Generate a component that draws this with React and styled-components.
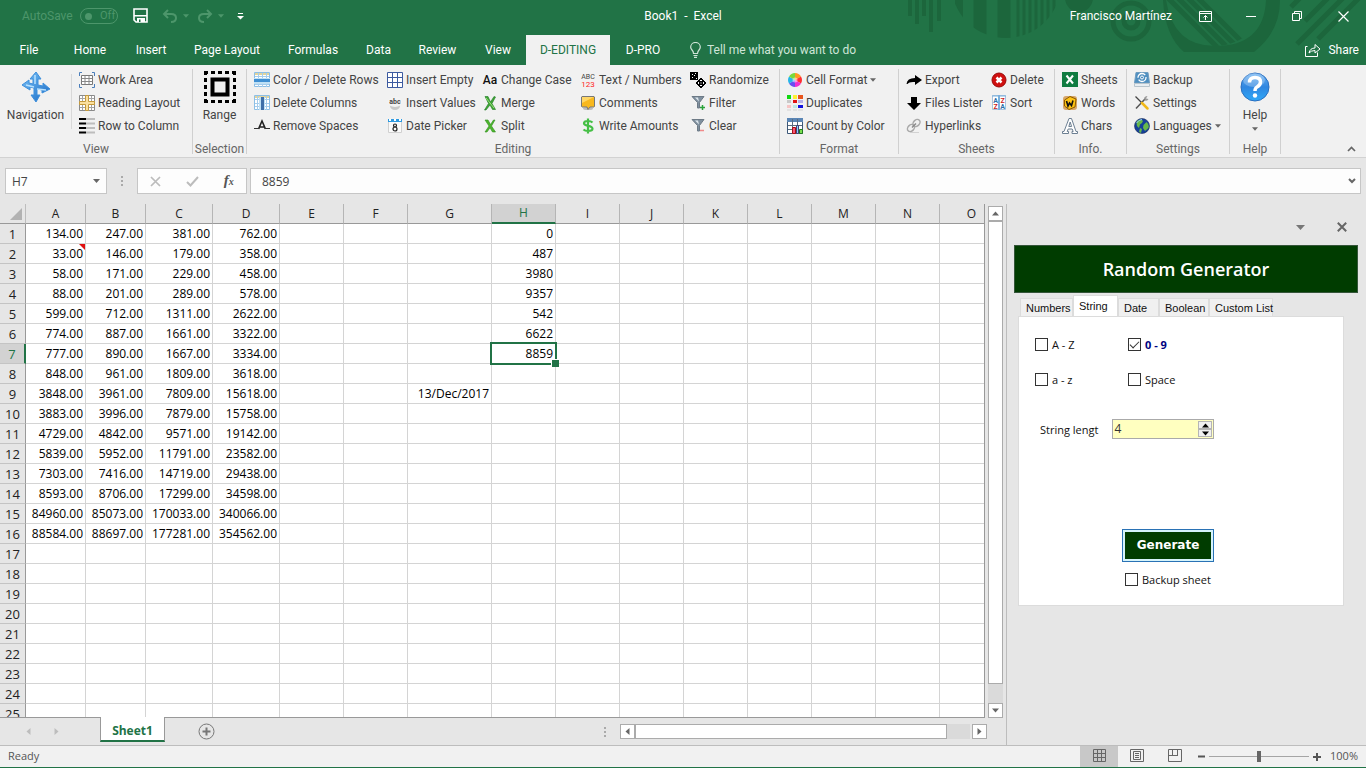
import React, { useState } from 'react';
import styled, { createGlobalStyle, css } from 'styled-components';

const GlobalStyle = createGlobalStyle`
* { box-sizing: border-box; }
body { margin: 0; background: #e6e6e6; }
body, button, input { font-family: Roboto, "Open Sans", sans-serif; font-size: 12px; }
button { border: none; background: none; padding: 0; color: inherit; cursor: pointer; }
svg { display: block; flex: none; }
`;

const columns = [
    ['A', 60], ['B', 60], ['C', 67], ['D', 67], ['E', 64], ['F', 64], ['G', 84], ['H', 64],
    ['I', 64], ['J', 64], ['K', 64], ['L', 64], ['M', 64], ['N', 64], ['O', 64],
];

const numbers = [
    ['134.00', '247.00', '381.00', '762.00'],
    ['33.00', '146.00', '179.00', '358.00'],
    ['58.00', '171.00', '229.00', '458.00'],
    ['88.00', '201.00', '289.00', '578.00'],
    ['599.00', '712.00', '1311.00', '2622.00'],
    ['774.00', '887.00', '1661.00', '3322.00'],
    ['777.00', '890.00', '1667.00', '3334.00'],
    ['848.00', '961.00', '1809.00', '3618.00'],
    ['3848.00', '3961.00', '7809.00', '15618.00'],
    ['3883.00', '3996.00', '7879.00', '15758.00'],
    ['4729.00', '4842.00', '9571.00', '19142.00'],
    ['5839.00', '5952.00', '11791.00', '23582.00'],
    ['7303.00', '7416.00', '14719.00', '29438.00'],
    ['8593.00', '8706.00', '17299.00', '34598.00'],
    ['84960.00', '85073.00', '170033.00', '340066.00'],
    ['88584.00', '88697.00', '177281.00', '354562.00'],
];
const randoms = ['0', '487', '3980', '9357', '542', '6622', '8859'];
const rows = Array.from({ length: 25 }, (_, i) => i + 1);

const cellValue = (row, col) => {
    if (col === 'G' && row === 9) return '13/Dec/2017';
    if (col === 'H') return randoms[row - 1] || '';
    const i = 'ABCD'.indexOf(col);
    return i >= 0 && numbers[row - 1] ? numbers[row - 1][i] : '';
};

const Icon = ({ size = 16, children }) => (
    <svg width={size} height={size} viewBox="0 0 16 16" aria-hidden="true">{children}</svg>
);

const Caret = ({ color = '#666', size = 7 }) => (
    <svg width={size} height="4" viewBox="0 0 7 4" aria-hidden="true"><path d="M0 0h7L3.5 4z" fill={color} /></svg>
);

const icons = {
    workArea: (
        <Icon>
            <path d="M0.5 4V0.5H3M13 0.5h2.5V4M0.5 12v3.5H3M13 15.5h2.5V12" fill="none" stroke="#4a7ebb" />
            <path d="M2.5 3.5h11v9h-11z" fill="#fff" stroke="#777" />
            <path d="M2.5 6.5h11M2.5 9.5h11M6 3.5v9M10 3.5v9" fill="none" stroke="#888" />
        </Icon>
    ),
    readingLayout: (
        <Icon>
            <path d="M0.5 0.5h15v15h-15z" fill="#fff" stroke="#8a8a8a" />
            <path d="M3.5 1v14M12.5 1v14M1 3.5h14M1 12.5h14" stroke="#a5a5a5" />
            <path d="M6.5 0.5h3v6h6v3h-6v6h-3v-6h-6v-3h6z" fill="#fbe0a0" stroke="#c59a3c" />
        </Icon>
    ),
    rowToColumn: (
        <Icon>
            <path d="M0 1h7M0 5.5h7M0 10h7M0 14.5h7" stroke="#000" strokeWidth="2" />
            <path d="M7 1h9M7 5.5h9M7 10h9M7 14.5h9" stroke="#bdbdbd" strokeWidth="2" />
        </Icon>
    ),
    deleteRows: (
        <Icon>
            <path d="M0.5 0.5h15v14h-15z" fill="#fff" stroke="#8cbfe6" />
            <path d="M1 1h14v2H1z" fill="#e3d49a" />
            <path d="M4.5 1v14M8.5 1v14M12.5 1v14M1 4.5h14M1 12.5h14" stroke="#a6cdec" />
            <path d="M0 6h16v6H0z" fill="#bfe0f5" /><path d="M0 7h16v3H0z" fill="#3f8fd2" />
        </Icon>
    ),
    deleteColumns: (
        <Icon>
            <path d="M0.5 0.5h15v14h-15z" fill="#fff" stroke="#8cbfe6" />
            <path d="M1 1h14v2H1z" fill="#e3d49a" />
            <path d="M1 4.5h14M1 8.5h14M1 11.5h14M3.5 1v14M12.5 1v14" stroke="#a6cdec" />
            <path d="M5 2h6v13H5z" fill="#bfe0f5" /><path d="M7 2h3v13H7z" fill="#3f6fa8" />
        </Icon>
    ),
    removeSpaces: (
        <Icon>
            <path d="M4.5 11L8 3l3.5 8M5.5 9h5" fill="none" stroke="#222" strokeWidth="1.6" />
            <path d="M0 10.5h5.5M10.5 10.5H16" stroke="#333" />
        </Icon>
    ),
    insertEmpty: (
        <Icon>
            <path d="M0.5 0.5h15v15h-15zM5.5 0v16M10.5 0v16M0 5.5h16M0 10.5h16" fill="#fff" stroke="#3c5aa0" />
        </Icon>
    ),
    insertValues: (
        <Icon>
            <ellipse cx="8" cy="11" rx="5" ry="4" fill="#c9c9c9" />
            <ellipse cx="8" cy="7" rx="7.5" ry="5" fill="#f3f3f3" />
            <text x="8" y="9" fontSize="7" fontWeight="bold" fill="#444" textAnchor="middle">abc</text>
        </Icon>
    ),
    datePicker: (
        <Icon>
            <path d="M1.5 2.5h13v12h-13z" fill="#fafafa" stroke="#d0d0d0" />
            <path d="M1 1h14v3H1z" fill="#2e9ae0" /><path d="M2 1h2v2H2zM7 1h2v2H7zM12 1h2v2h-2z" fill="#fff" />
            <circle cx="8" cy="7.5" r="1.5" fill="none" stroke="#222" strokeWidth="1.2" />
            <circle cx="8" cy="11" r="2" fill="none" stroke="#222" strokeWidth="1.2" />
        </Icon>
    ),
    changeCase: (
        <Icon>
            <text x="8" y="12" fontSize="12" fontWeight="500" fill="#111" textAnchor="middle">Aa</text>
        </Icon>
    ),
    merge: (
        <Icon>
            <path d="M3 1.5h3L8.500 7 12 1.500l1.500.5L10 8.500l3.500 6h-3L8 10l-4 5H2.500l4-6.500z" fill="#3fa535" stroke="#1f7a24" strokeWidth="0.6" />
            <path d="M4 3l8 10" stroke="#9be07c" />
        </Icon>
    ),
    split: (
        <Icon>
            <path d="M3 2h3l2.500 4.500L11.500 2H13L9.500 8l4 6h-3L8 9.800 5 14H3l4-6z" fill="#4db52c" stroke="#2f8f1e" strokeWidth="0.6" />
        </Icon>
    ),
    textNumbers: (
        <Icon>
            <text x="8" y="7" fontSize="7" fill="#444" textAnchor="middle">ABC</text>
            <text x="8" y="15" fontSize="8" fill="#ff1f1f" textAnchor="middle">123</text>
        </Icon>
    ),
    comments: (
        <Icon>
            <ellipse cx="8" cy="13.5" rx="5" ry="1.5" fill="#9a9a9a" opacity=".6" />
            <path d="M2 1.5h12l.5.5v9.500l-.5.5h-4L8 14.500l-1-2.500H2l-.5-.5V2z" fill="#f8b81e" stroke="#777" />
            <path d="M2 2h12L2 8z" fill="#ffd766" />
        </Icon>
    ),
    writeAmounts: (
        <Icon>
            <path d="M12.5 4.500Q11 3 8 3 4 3 4 5.300 4 7 8 7.800q4.500.8 4.500 3Q12.500 13 8 13 5 13 3.500 11.500M8 .5v15" fill="none" stroke="#45bf45" strokeWidth="2.2" />
        </Icon>
    ),
    randomize: (
        <Icon>
            <path d="M0 0h8v8H0z" fill="#000" />
            <path d="M2 2h1v1H2zM5 1h1v1H5zM4 3h1v1H4zM2 5h1v1H2zM6 6h1v1H6z" fill="#fff" />
            <path d="M11 6l5 5-5 5-5-5z" fill="#000" stroke="#000" strokeLinejoin="round" />
            <path d="M10 8h2v1h-2zM8 10h1v2H8zM10.500 10.500h1v1h-1zM13 10h1v2h-1zM10 13h2v1h-2z" fill="#fff" />
        </Icon>
    ),
    filter: (
        <Icon>
            <path d="M2 1.5h12L9.500 7.500V13h-2V7.500z" fill="#7f909f" stroke="#6d7a86" /><path d="M5 2.500h3l1 4z" fill="#dfe7ee" />
            <path d="M12.500 10v5M10 12.500h5" stroke="#2aa33a" strokeWidth="1.5" />
        </Icon>
    ),
    clear: (
        <Icon>
            <path d="M2 1.5h12L9.500 7.500V13h-2V7.500z" fill="#7f909f" stroke="#6d7a86" /><path d="M5 2.500h3l1 4z" fill="#dfe7ee" />
            <path d="M10 12.500h4" stroke="#f08a8a" strokeWidth="1.5" />
        </Icon>
    ),
    cellFormat: (
        <Icon>
            <path d="M8 8V1a7 7 0 0 1 6 3.500z" fill="#ff9a1f" /><path d="M8 8l6-3.500a7 7 0 0 1 0 7z" fill="#ff3030" />
            <path d="M8 8l6 3.500A7 7 0 0 1 8 15z" fill="#f02fd0" /><path d="M8 8v7a7 7 0 0 1-6-3.500z" fill="#6a4cf0" />
            <path d="M8 8l-6 3.500a7 7 0 0 1 0-7z" fill="#25b6e8" /><path d="M8 8L2 4.500A7 7 0 0 1 8 1z" fill="#7bd93a" />
            <circle cx="8" cy="8" r="2.500" fill="#fff" opacity=".5" />
        </Icon>
    ),
    duplicates: (
        <Icon>
            <path d="M0 0h4v4H0z" fill="#11d911" /><path d="M6 0h4v4H6z" fill="#ffef2e" /><path d="M11 0h5v4h-5z" fill="#e8551c" />
            <path d="M0 5h4v3H0z" fill="#c9c9c9" /><path d="M6 5h4v3H6z" fill="#e01414" /><path d="M11 5h5v3h-5z" fill="#b5b0e8" />
            <path d="M0 10h4v3H0z" fill="#f6c4c4" /><path d="M6 10h4v3H6z" fill="#bde9e4" /><path d="M11 10h5v3h-5z" fill="#1111dd" />
            <path d="M0 14h4v2H0zM6 14h4v2H6zM11 14h5v2h-5z" fill="#e2e2e2" />
        </Icon>
    ),
    countByColor: (
        <Icon>
            <path d="M0.5 0.5h15v15h-15z" fill="#fff" stroke="#3d5878" /><path d="M0 0h16v4H0z" fill="#5b86b5" />
            <path d="M5.500 1v15M10.500 1v6M1 7.500h14M1 11.500h5" stroke="#5a6c80" />
            <path d="M5.500 9.500h3v6h-3z" fill="#f7557a" stroke="#a11" /><path d="M9.500 7.500h2v8h-2z" fill="#8fd0ff" stroke="#447" />
            <path d="M12.500 11.500h3v4h-3z" fill="#7ae04f" stroke="#272" />
        </Icon>
    ),
    exportArrow: (
        <Icon>
            <path d="M0.5 12Q1 6 9 6V3l7 5-7 5v-3Q3 9.500 1.500 12z" fill="#000" />
        </Icon>
    ),
    filesLister: (
        <Icon><path d="M5 2h6v6h4l-7 7-7-7h4z" fill="#000" /></Icon>
    ),
    hyperlinks: (
        <Icon>
            <ellipse cx="10.500" cy="5" rx="4" ry="3" fill="none" stroke="#a9a9a9" strokeWidth="1.5" transform="rotate(-45 10.5 5)" />
            <ellipse cx="5" cy="10" rx="4" ry="3" fill="none" stroke="#a9a9a9" strokeWidth="1.5" transform="rotate(-45 5 10)" />
            <path d="M6 9.500l4-4" stroke="#888" strokeWidth="1.5" /><path d="M4 14.500h9" stroke="#d2d2d2" />
        </Icon>
    ),
    remove: (
        <Icon>
            <circle cx="8" cy="8" r="7" fill="#d01010" stroke="#9a0808" />
            <path d="M5.500 5.500l5 5M10.500 5.500l-5 5" stroke="#fff" strokeWidth="2.500" />
        </Icon>
    ),
    sort: (
        <Icon>
            <path d="M1.5 0.5h13v14h-13z" fill="#fff" stroke="#a9c3dc" /><path d="M8 0v15" stroke="#7ab0dd" strokeWidth="2" />
            <path d="M1 1h14" stroke="#7ab0dd" />
            <text x="4.500" y="7.500" fontSize="7" fontWeight="bold" fill="#2d6da8" textAnchor="middle">A</text>
            <text x="11.500" y="7.500" fontSize="7" fontWeight="bold" fill="#c22" textAnchor="middle">Z</text>
            <text x="4.500" y="14" fontSize="7" fontWeight="bold" fill="#c22" textAnchor="middle">Z</text>
            <text x="11.500" y="14" fontSize="7" fontWeight="bold" fill="#2d6da8" textAnchor="middle">A</text>
        </Icon>
    ),
    sheets: (
        <Icon>
            <path d="M0 0h16v15H0z" fill="#107c41" />
            <path d="M4.500 3.500l6.500 8M11 3.500l-6.500 8" stroke="#fff" strokeWidth="2" />
        </Icon>
    ),
    words: (
        <Icon>
            <rect x="1" y="1" width="14" height="14" rx="3" fill="#d8a76a" />
            <path d="M2.500 5L8 1.500 14 4l-1 8-6 2.500L2.500 11z" fill="#ffc414" stroke="#8a5a00" />
            <path d="M4.500 6l1.500 5L7.500 8l2 2.500L11 5.500" fill="none" stroke="#111" strokeWidth="1.6" />
        </Icon>
    ),
    chars: (
        <Icon>
            <path d="M0.5 15.500v-2H2L7 .5h2.500L14 13.500h1.500v2H10v-2h1.200l-1-2.500h-4l-1 2.500h1.300v2zM6.800 8.500h2.800L8.200 4z" fill="#fff" stroke="#6c7f92" fillRule="evenodd" />
        </Icon>
    ),
    backup: (
        <Icon>
            <path d="M2 .5h12l1.500 10.500h-15z" fill="#4f8fc0" stroke="#6f9dc0" /><path d="M0.5 11.500h15v3h-15z" fill="#e9eef2" stroke="#b8c4cc" />
            <circle cx="8" cy="5.500" r="4" fill="none" stroke="#fff" strokeWidth="1.300" strokeDasharray="10 2" />
            <circle cx="8" cy="5.500" r="1.500" fill="none" stroke="#fff" />
        </Icon>
    ),
    settings: (
        <Icon>
            <path d="M2 13.500L11 4" stroke="#555" strokeWidth="1.500" /><path d="M10 3.500Q10.500 1 13.500 1L12 3.500l2.500.5Q13.500 6.500 11 5.500" fill="#999" />
            <path d="M1.5 1.500L8 8" stroke="#444" strokeWidth="1.200" /><path d="M8 8l5.500 5.500" stroke="#f0b81a" strokeWidth="2.500" strokeLinecap="round" />
        </Icon>
    ),
    languages: (
        <Icon>
            <circle cx="8" cy="8" r="7.500" fill="#16409a" stroke="#1d2f55" strokeWidth=".6" />
            <path d="M3 3q4-2.500 6 0-1 3-3 3.500L5 10Q1.500 8 3 3zM9.500 7l3-3q3 3 2 6L11 13 9 10zM6 10l2 1-1 4-2-1z" fill="#67b84a" />
            <path d="M2.500 5Q5 1.500 8 1.500" stroke="#8fd0ff" fill="none" />
        </Icon>
    ),
};

/* ---- ribbon ---- */

const editing = [
    [133, [['deleteRows', 'Color / Delete Rows'], ['deleteColumns', 'Delete Columns'], ['removeSpaces', 'Remove Spaces']]],
    [95, [['insertEmpty', 'Insert Empty'], ['insertValues', 'Insert Values'], ['datePicker', 'Date Picker']]],
    [98, [['changeCase', 'Change Case'], ['merge', 'Merge'], ['split', 'Split']]],
    [110, [['textNumbers', 'Text / Numbers'], ['comments', 'Comments'], ['writeAmounts', 'Write Amounts']]],
    [89, [['randomize', 'Randomize'], ['filter', 'Filter'], ['clear', 'Clear']]],
];

const Tools = ({ cols }) => cols.map(([width, items], i) => (
    <ToolColumn key={i} $width={width}>
        {items.map(([icon, label, drop]) => (
            <Tool key={label} type="button">{icons[icon]}<ToolLabel>{label}</ToolLabel>{drop && <Caret size={6} />}</Tool>
        ))}
    </ToolColumn>
));

const NavigationIcon = () => (
    <svg width="30" height="32" viewBox="0 0 30 32" aria-hidden="true">
        <defs>
            <linearGradient id="nav" x1="0" y1="0" x2="1" y2="1"><stop offset="0" stopColor="#7cc4f8" /><stop offset="1" stopColor="#1668c4" /></linearGradient>
        </defs>
        <path d="M15 1l5 7h-3v6l5 1v-3l7 6-8 4v-3l-5-1v6h3l-4 7-5-7h3v-7l-4-1v3l-8-5 7-5v3l4 1V8H9z" fill="url(#nav)" stroke="#3d8fdc" />
        <path d="M14 4v9M5 14l8 2M16 18l9 1" stroke="#b8e2ff" strokeWidth="1.500" />
    </svg>
);

const RangeIcon = () => (
    <svg width="32" height="32" viewBox="0 0 32 32" aria-hidden="true">
        <path d="M0 1.500h32M0 30.500h32M1.500 0v32M30.500 0v32" stroke="#000" strokeWidth="3" strokeDasharray="4 3" />
        <rect x="8.500" y="8.500" width="15" height="15" fill="none" stroke="#000" strokeWidth="4" />
    </svg>
);

const HelpIcon = () => (
    <svg width="32" height="32" viewBox="0 0 32 32" aria-hidden="true">
        <defs>
            <linearGradient id="help" x1="0" y1="0" x2="0" y2="1"><stop offset="0" stopColor="#6cb2f2" /><stop offset=".5" stopColor="#2f86e0" /><stop offset="1" stopColor="#2fa8f8" /></linearGradient>
        </defs>
        <circle cx="16" cy="16" r="14" fill="url(#help)" stroke="#2a6fc0" />
        <ellipse cx="15" cy="9" rx="11" ry="7" fill="#fff" opacity=".25" />
        <path d="M10.500 11.500q0-5 5.500-5t5.500 4.500q0 3-3.500 5-2 1-2 4" fill="none" stroke="#fff" strokeWidth="3.500" />
        <circle cx="16" cy="24.500" r="2.200" fill="#fff" />
    </svg>
);

const Ribbon = () => (
    <RibbonBar>
        <Group>
            <GroupBody>
                <BigTool type="button" $width={71}><NavigationIcon />Navigation</BigTool>
                <InnerLine />
                <Tools cols={[[113, [['workArea', 'Work Area'], ['readingLayout', 'Reading Layout'], ['rowToColumn', 'Row to Column']]]]} />
            </GroupBody>
            <GroupName>View</GroupName>
        </Group>
        <Group>
            <GroupBody><BigTool type="button" $width={53}><RangeIcon />Range</BigTool></GroupBody>
            <GroupName>Selection</GroupName>
        </Group>
        <Group>
            <GroupBody $pad><Tools cols={editing} /></GroupBody>
            <GroupName>Editing</GroupName>
        </Group>
        <Group>
            <GroupBody $pad><Tools cols={[[111, [['cellFormat', 'Cell Format', true], ['duplicates', 'Duplicates'], ['countByColor', 'Count by Color']]]]} /></GroupBody>
            <GroupName>Format</GroupName>
        </Group>
        <Group>
            <GroupBody $pad>
                <Tools cols={[
                    [85, [['exportArrow', 'Export'], ['filesLister', 'Files Lister'], ['hyperlinks', 'Hyperlinks']]],
                    [63, [['remove', 'Delete'], ['sort', 'Sort']]],
                ]} />
            </GroupBody>
            <GroupName>Sheets</GroupName>
        </Group>
        <Group>
            <GroupBody $pad><Tools cols={[[64, [['sheets', 'Sheets'], ['words', 'Words'], ['chars', 'Chars']]]]} /></GroupBody>
            <GroupName>Info.</GroupName>
        </Group>
        <Group>
            <GroupBody $pad><Tools cols={[[95, [['backup', 'Backup'], ['settings', 'Settings'], ['languages', 'Languages', true]]]]} /></GroupBody>
            <GroupName>Settings</GroupName>
        </Group>
        <Group>
            <GroupBody><BigTool type="button" $width={50}><HelpIcon />Help<Caret size={6} /></BigTool></GroupBody>
            <GroupName>Help</GroupName>
        </Group>
        <Collapse type="button" aria-label="Collapse the ribbon">
            <svg width="9" height="6" viewBox="0 0 9 6"><path d="M1 5l3.500-3.500L8 5" fill="none" stroke="#666" strokeWidth="1.700" /></svg>
        </Collapse>
    </RibbonBar>
);

/* ---- title bar ---- */

const Artwork = () => (
    <Art width="466" height="65" viewBox="900 0 466 65" aria-hidden="true">
        <defs>
            <clipPath id="disc"><circle cx="1006" cy="-17" r="55" /></clipPath>
            <clipPath id="bowl"><circle cx="1215" cy="-6" r="52" /></clipPath>
        </defs>
        <g stroke="#1c663c" fill="none">
            <path d="M910 0v16M917 0v24M924 0v16M931 0v32M939 0v21" strokeWidth="4" />
            <g clipPath="url(#disc)">
                <path d="M959 0v40" strokeWidth="8" /><path d="M980 0v40M1004 0v40" strokeWidth="13" />
                <path d="M1018 0v40M1024 0v40M1030 0v40M1036 0v40M1042 0v40M1048 0v40M1054 0v40" strokeWidth="3" />
            </g>
            <circle cx="1079" cy="-2" r="14" fill="#1c663c" stroke="none" />
            <circle cx="1131" cy="21" r="18" strokeWidth="5" />
            <circle cx="1131" cy="21" r="7" strokeWidth="5" />
            <path d="M1163 0q2 36 21 52h70q26-20 26-52h-14q-2 46-51 46-42 0-49-46z" fill="#1c663c" stroke="none" />
            <g clipPath="url(#bowl)" strokeWidth="5">
                <path d="M1160-10l66 66M1170-10l66 66M1180-10l66 66M1190-10l66 66" />
            </g>
            <path d="M1291 7l14-14M1305 21l28-28M1297 44l51-51M1318 39l46-46" strokeWidth="5" />
        </g>
    </Art>
);

const tabs = [
    ['File', 58], ['Home', 64], ['Insert', 58], ['Page Layout', 94], ['Formulas', 78], ['Data', 53],
    ['Review', 65], ['View', 56], ['D-EDITING', 84], ['D-PRO', 66],
];

const TitleBar = () => (
    <Header>
        <Artwork />
        <TitleRow>
            <QuickAccess>
                <AutoSave>AutoSave<Toggle type="button" role="switch" aria-checked="false"><Knob />Off</Toggle></AutoSave>
                <QuickButton type="button" aria-label="Save" $left={15}>
                    <svg width="16" height="16" viewBox="0 0 16 16"><path d="M1 1h13v13H3l-2-2z" fill="none" stroke="#fff" strokeWidth="1.600" /><path d="M1 7h13v1.600H1zM4 10h8v4H4z" fill="#fff" /><path d="M6 11.500h1.500V14H6z" fill="#217346" /></svg>
                </QuickButton>
                <QuickButton type="button" aria-label="Undo" $left={13}>
                    <svg width="16" height="14" viewBox="0 0 16 14"><path d="M6 1L2 5l4 4M2 5h7q5 0 5 4t-5 4" fill="none" stroke="#4d966b" strokeWidth="2" /></svg>
                    <Caret color="#4d966b" size={6} />
                </QuickButton>
                <QuickButton type="button" aria-label="Redo" $left={8}>
                    <svg width="16" height="14" viewBox="0 0 16 14"><path d="M10 1l4 4-4 4M14 5H7Q2 5 2 9t5 4" fill="none" stroke="#4d966b" strokeWidth="2" /></svg>
                    <Caret color="#4d966b" size={6} />
                </QuickButton>
                <QuickButton type="button" aria-label="Customize Quick Access Toolbar" $left={13}>
                    <svg width="7" height="7" viewBox="0 0 7 7"><path d="M1 .5h5" stroke="#fff" /><path d="M0 3h7L3.500 6.500z" fill="#fff" /></svg>
                </QuickButton>
            </QuickAccess>
            <FileName>Book1&nbsp; -&nbsp; Excel</FileName>
            <WindowArea>
                <span>Francisco Martínez</span>
                <WindowButtons>
                    <WindowButton type="button" aria-label="Ribbon display options">
                        <svg width="13" height="11" viewBox="0 0 13 11"><path d="M.5.5h12v10H.5zM.5 2.500h12M6.500 9V4.500M4.500 6.500l2-2 2 2" fill="none" stroke="#fff" /></svg>
                    </WindowButton>
                    <WindowButton type="button" aria-label="Minimize">
                        <svg width="10" height="10" viewBox="0 0 10 10"><path d="M0 5.500h10" stroke="#fff" /></svg>
                    </WindowButton>
                    <WindowButton type="button" aria-label="Restore">
                        <svg width="10" height="10" viewBox="0 0 10 10"><path d="M.5 2.500h7v7h-7zM2.500 2.500v-2h7v7h-2" fill="none" stroke="#fff" /></svg>
                    </WindowButton>
                    <WindowButton type="button" aria-label="Close">
                        <svg width="11" height="11" viewBox="0 0 11 11"><path d="M.5.5l10 10M10.500.5l-10 10" stroke="#fff" strokeWidth="1.200" /></svg>
                    </WindowButton>
                </WindowButtons>
            </WindowArea>
        </TitleRow>
        <TabRow>
            {tabs.map(([name, width]) => (
                <RibbonTab key={name} type="button" $width={width} $active={name === 'D-EDITING'}>{name}</RibbonTab>
            ))}
            <TellMe>
                <svg width="11" height="16" viewBox="0 0 11 16" aria-hidden="true"><path d="M3.500 11.500q0-2-1.500-3.500T.7 5A4.800 4.500 0 0 1 10.300 5Q10.300 6.500 9 8t-1.500 3.500zM3.500 13.500h4M4 15.300h3" fill="none" stroke="#cfe5d8" strokeWidth="1.200" /></svg>
                <TellMeInput aria-label="Tell me what you want to do" placeholder="Tell me what you want to do" />
            </TellMe>
            <Share type="button">
                <svg width="16" height="14" viewBox="0 0 16 14" aria-hidden="true"><path d="M2.500 3.500h-2v10h12v-4M4 10q1-5 6-5V1.500L15 6l-5 4V7.500Q6 7.500 4 10z" fill="none" stroke="#fff" /></svg>
                Share
            </Share>
        </TabRow>
    </Header>
);

/* ---- sheet ---- */

const Sheet = () => (
    <SheetArea>
        <Table>
            <colgroup>
                <col style={{ width: 26 }} />
                {columns.map(([c, w]) => <col key={c} style={{ width: w }} />)}
            </colgroup>
            <thead>
                <tr>
                    <Corner><svg width="12" height="12" viewBox="0 0 12 12" aria-label="Select all"><path d="M12 0v12H0z" fill="#b2b2b2" /></svg></Corner>
                    {columns.map(([c]) => <ColHead key={c} scope="col" $active={c === 'H'}>{c}</ColHead>)}
                </tr>
            </thead>
            <tbody>
                {rows.map((r) => (
                    <tr key={r}>
                        <RowHead scope="row" $active={r === 7}>{r}</RowHead>
                        {columns.map(([c]) => (
                            <Cell key={c}>
                                {cellValue(r, c)}
                                {c === 'A' && r === 2 && <NoteMark />}
                                {c === 'H' && r === 7 && <Selection />}
                            </Cell>
                        ))}
                    </tr>
                ))}
            </tbody>
        </Table>
    </SheetArea>
);

const Arrow = ({ turn = 0, color = '#666' }) => (
    <svg width="9" height="9" viewBox="0 0 9 9" aria-hidden="true"><path d="M1 6.500L4.500 2.500 8 6.500z" fill={color} transform={`rotate(${turn} 4.500 4.500)`} /></svg>
);

const SheetBar = () => (
    <BottomBar>
        <SheetArrows>
            <button type="button" aria-label="Previous sheet"><Arrow turn={-90} color="#bdbdbd" /></button>
            <button type="button" aria-label="Next sheet"><Arrow turn={90} color="#bdbdbd" /></button>
        </SheetArrows>
        <SheetTab type="button">Sheet1</SheetTab>
        <AddSheet type="button" aria-label="New sheet">
            <svg width="17" height="17" viewBox="0 0 17 17"><circle cx="8.500" cy="8.500" r="7.500" fill="none" stroke="#777" /><path d="M8.500 4.500v8M4.500 8.500h8" stroke="#777" strokeWidth="2" /></svg>
        </AddSheet>
        <HScroll>
            <Dots />
            <ScrollButton type="button" aria-label="Scroll left"><Arrow turn={-90} /></ScrollButton>
            <HTrack><HThumb /></HTrack>
            <ScrollButton type="button" aria-label="Scroll right"><Arrow turn={90} /></ScrollButton>
        </HScroll>
    </BottomBar>
);

/* ---- task pane ---- */

const paneTabs = [['Numbers', 53], ['String', 45], ['Date', 41], ['Boolean', 50], ['Custom List', 64]];

const RandomPane = () => {
    const [tab, setTab] = useState('String');
    const [length, setLength] = useState(4);
    return (
        <Pane>
            <PaneTools>
                <button type="button" aria-label="Task pane options"><svg width="9" height="5" viewBox="0 0 9 5"><path d="M0 0h9L4.500 5z" fill="#777" /></svg></button>
                <button type="button" aria-label="Close pane"><svg width="10" height="10" viewBox="0 0 10 10"><path d="M.8.8l8.400 8.400M9.200.8L.8 9.200" stroke="#666" strokeWidth="2" /></svg></button>
            </PaneTools>
            <Banner>Random Generator</Banner>
            <PaneTabs role="tablist">
                {paneTabs.map(([name, width]) => (
                    <PaneTab key={name} type="button" role="tab" aria-selected={tab === name} $active={tab === name} $width={width} onClick={() => setTab(name)}>{name}</PaneTab>
                ))}
            </PaneTabs>
            <PaneBody>
                <CheckGrid>
                    <Check><CheckBox type="checkbox" />A - Z</Check>
                    <Check $strong><CheckBox type="checkbox" defaultChecked />0 - 9</Check>
                    <Check><CheckBox type="checkbox" />a - z</Check>
                    <Check><CheckBox type="checkbox" />Space</Check>
                </CheckGrid>
                <LengthRow>
                    <label htmlFor="length">String lengt</label>
                    <Spinner>
                        <SpinInput id="length" value={length} onChange={(e) => setLength(e.target.value)} />
                        <SpinButtons>
                            <SpinButton type="button" aria-label="Increase" onClick={() => setLength(Number(length) + 1)}><Arrow color="#000" /></SpinButton>
                            <SpinButton type="button" aria-label="Decrease" onClick={() => setLength(Number(length) - 1)}><Arrow color="#000" turn={180} /></SpinButton>
                        </SpinButtons>
                    </Spinner>
                </LengthRow>
                <Actions>
                    <Generate type="button">Generate</Generate>
                    <Check><CheckBox type="checkbox" />Backup sheet</Check>
                </Actions>
            </PaneBody>
        </Pane>
    );
};

const App = () => (
    <>
        <GlobalStyle />
        <Window>
            <TitleBar />
            <Ribbon />
            <FormulaBar>
                <NameBox>
                    <NameInput aria-label="Name box" defaultValue="H7" />
                    <Caret />
                </NameBox>
                <Dots />
                <FormulaButtons>
                    <button type="button" aria-label="Cancel"><svg width="11" height="11" viewBox="0 0 11 11"><path d="M1 1l9 9M10 1l-9 9" stroke="#bcbcbc" strokeWidth="1.700" /></svg></button>
                    <button type="button" aria-label="Enter"><svg width="13" height="11" viewBox="0 0 13 11"><path d="M1 6l3.500 3.500L12 1" fill="none" stroke="#bcbcbc" strokeWidth="2" /></svg></button>
                    <Fx type="button" aria-label="Insert function">f<sub>x</sub></Fx>
                </FormulaButtons>
                <FormulaBox>
                    <NameInput aria-label="Formula" defaultValue="8859" />
                    <svg width="8" height="6" viewBox="0 0 8 6" aria-hidden="true"><path d="M1 1l3 3 3-3" fill="none" stroke="#666" strokeWidth="2" /></svg>
                </FormulaBox>
            </FormulaBar>
            <Workspace>
                <Book>
                    <SheetRow>
                        <Sheet />
                        <VScroll>
                            <ScrollButton type="button" aria-label="Scroll up"><Arrow /></ScrollButton>
                            <VTrack><VThumb /></VTrack>
                            <ScrollButton type="button" aria-label="Scroll down"><Arrow turn={180} /></ScrollButton>
                        </VScroll>
                    </SheetRow>
                    <SheetBar />
                </Book>
                <RandomPane />
            </Workspace>
            <StatusBar>
                <StatusText>Ready</StatusText>
                <StatusTools>
                    <ViewButton type="button" aria-label="Normal view" $active>
                        <svg width="13" height="13" viewBox="0 0 13 13"><path d="M.5.5h12v12H.5zM4.500 0v13M8.500 0v13M0 4.500h13M0 8.500h13" fill="none" stroke="#666" /></svg>
                    </ViewButton>
                    <ViewButton type="button" aria-label="Page layout view">
                        <svg width="14" height="13" viewBox="0 0 14 13"><path d="M.5.5h13v12H.5zM3.500 2.500h7v8h-7zM5 4.500h4M5 6.500h4M5 8.500h4" fill="none" stroke="#666" /></svg>
                    </ViewButton>
                    <ViewButton type="button" aria-label="Page break view">
                        <svg width="14" height="13" viewBox="0 0 14 13"><path d="M.5.5h13v12H.5zM4.500 0v6.500M9.500 0v6.500M0 6.500h10" fill="none" stroke="#666" /></svg>
                    </ViewButton>
                    <ZoomButton type="button" aria-label="Zoom out"><svg width="7" height="7" viewBox="0 0 7 7"><path d="M0 3.500h7" stroke="#555" strokeWidth="2" /></svg></ZoomButton>
                    <ZoomSlider type="range" aria-label="Zoom" min="0" max="100" defaultValue="50" />
                    <ZoomButton type="button" aria-label="Zoom in"><svg width="8" height="8" viewBox="0 0 8 8"><path d="M0 4h8M4 0v8" stroke="#555" strokeWidth="2" /></svg></ZoomButton>
                    <ZoomValue type="button">100%</ZoomValue>
                </StatusTools>
            </StatusBar>
        </Window>
    </>
);

const Window = styled.div`
display: flex;
flex-direction: column;
height: 100vh;
overflow: hidden;
background: #e6e6e6;
color: #444;
`;

const Header = styled.header`
position: relative;
background: #217346;
color: #fff;
`;
const Art = styled.svg`
position: absolute;
top: 0;
right: 0;
`;
const TitleRow = styled.div`
position: relative;
display: grid;
grid-template-columns: 1fr auto 1fr;
align-items: center;
height: 32px;
`;
const QuickAccess = styled.div`
display: flex;
align-items: center;
padding-left: 22px;
`;
const AutoSave = styled.span`
display: flex;
align-items: center;
justify-content: space-between;
width: 96px;
color: #4d966b;
`;
const Toggle = styled.button`
display: flex;
align-items: center;
gap: 8px;
width: 38px;
height: 16px;
padding-left: 4px;
border: 1px solid #4d966b;
border-radius: 8px;
font-size: 11px;
line-height: 14px;
color: #4d966b;
`;
const Knob = styled.span`
width: 7px;
height: 7px;
border-radius: 50%;
background: #4d966b;
`;
const QuickButton = styled.button`
display: flex;
align-items: center;
gap: 5px;
margin-left: ${(p) => p.$left}px;
`;
const FileName = styled.span`
white-space: nowrap;
`;
const WindowArea = styled.div`
display: flex;
align-items: center;
justify-content: flex-end;
gap: 10px;
`;
const WindowButtons = styled.div`
display: flex;
`;
const WindowButton = styled.button`
display: flex;
align-items: center;
justify-content: center;
width: 46px;
height: 30px;
`;
const TabRow = styled.nav`
position: relative;
display: flex;
align-items: center;
height: 33px;
padding-top: 3px;
`;
const RibbonTab = styled.button`
width: ${(p) => p.$width}px;
height: 30px;
white-space: nowrap;
color: ${(p) => (p.$active ? '#217346' : '#fff')};
background: ${(p) => (p.$active ? '#f1f1f1' : 'transparent')};
`;
const TellMe = styled.div`
display: flex;
flex: 1;
align-items: center;
gap: 6px;
padding-left: 14px;
`;
const TellMeInput = styled.input`
flex: 1;
border: none;
outline: none;
padding: 0;
background: none;
color: #fff;
&::placeholder { color: #cfe5d8; opacity: 1; }
`;
const Share = styled.button`
display: flex;
align-items: center;
gap: 7px;
padding-right: 7px;
`;

const RibbonBar = styled.div`
display: flex;
height: 93px;
padding-top: 4px;
background: #f1f1f1;
border-bottom: 1px solid #d2d2d2;
`;
const Group = styled.section`
display: flex;
flex-direction: column;
height: 85px;
border-right: 1px solid #d0d0d0;
`;
const GroupBody = styled.div`
display: flex;
height: 71px;
padding-left: ${(p) => (p.$pad ? 7 : 0)}px;
`;
const GroupName = styled.div`
height: 14px;
line-height: 18px;
text-align: center;
color: #666;
`;
const ToolColumn = styled.div`
width: ${(p) => p.$width}px;
`;
const InnerLine = styled.div`
height: 55px;
margin: 5px 7px 0 0;
border-left: 1px solid #d8d8d8;
`;
const Tool = styled.button`
display: flex;
align-items: center;
gap: 3px;
height: 23px;
padding-bottom: 2px;
`;
const ToolLabel = styled.span`
white-space: nowrap;
`;
const BigTool = styled.button`
display: flex;
flex-direction: column;
align-items: center;
gap: 3px;
width: ${(p) => p.$width}px;
height: 64px;
padding-top: 2px;
line-height: 18px;
`;
const Collapse = styled.button`
margin-left: auto;
align-self: flex-end;
padding: 0 10px 5px 0;
`;

const field = css`
display: flex;
align-items: center;
height: 26px;
border: 1px solid #c6c6c6;
background: #fdfdfd;
`;
const FormulaBar = styled.div`
display: flex;
align-items: center;
height: 46px;
padding: 0 5px;
`;
const NameBox = styled.div`
${field}
width: 102px;
padding: 0 6px;
`;
const NameInput = styled.input`
flex: 1;
min-width: 0;
border: none;
outline: none;
padding: 0;
background: none;
font-family: "Open Sans", sans-serif;
color: #444;
`;
const Dots = styled.span`
flex: none;
width: 2px;
height: 10px;
margin: 0 14px;
background: repeating-linear-gradient(#aaa 0 2px, transparent 2px 4px);
`;
const FormulaButtons = styled.div`
${field}
justify-content: space-around;
width: 110px;
margin: 0 3px 0 0;
`;
const Fx = styled.button`
font-family: "Liberation Serif", serif;
font-style: italic;
font-weight: bold;
font-size: 15px;
line-height: 16px;
color: #555;
sub { font-size: 10px; vertical-align: baseline; }
`;
const FormulaBox = styled.div`
${field}
flex: 1;
padding: 0 4px 0 11px;
`;

const Workspace = styled.main`
display: flex;
flex: 1;
min-height: 0;
font-family: "Open Sans", sans-serif;
`;
const Book = styled.div`
display: flex;
flex-direction: column;
flex: 1;
min-width: 0;
`;
const SheetRow = styled.div`
display: flex;
flex: 1;
min-height: 0;
`;
const SheetArea = styled.div`
flex: 1;
overflow: hidden;
border-right: 1px solid #999;
border-bottom: 1px solid #999;
background: #fff;
`;
const Table = styled.table`
table-layout: fixed;
width: 1004px;
border-collapse: separate;
border-spacing: 0;
`;
const headCell = css`
height: 20px;
padding: 0;
font-size: 13px;
font-weight: normal;
line-height: 18px;
text-align: center;
color: ${(p) => (p.$active ? '#217346' : '#222')};
background: ${(p) => (p.$active ? '#d2d2d2' : '#e6e6e6')};
`;
const Corner = styled.td`
${headCell}
border-right: 1px solid #bdbdbd;
border-bottom: 1px solid #999;
svg { margin: 1px 0 0 10px; }
`;
const ColHead = styled.th`
${headCell}
font-size: 12px;
border-right: 1px solid #b5b5b5;
border-bottom: ${(p) => (p.$active ? '2px solid #217346' : '1px solid #999')};
`;
const RowHead = styled.th`
${headCell}
border-right: ${(p) => (p.$active ? '2px solid #217346' : '1px solid #999')};
border-bottom: 1px solid #c4c4c4;
`;
const Cell = styled.td`
position: relative;
height: 20px;
padding: 0 2px 0 0;
border-right: 1px solid #d4d4d4;
border-bottom: 1px solid #d4d4d4;
line-height: 19px;
text-align: right;
white-space: nowrap;
color: #000;
`;
const NoteMark = styled.span`
position: absolute;
top: 0;
right: 0;
border: 3px solid;
border-color: #e01010 #e01010 transparent transparent;
`;
const Selection = styled.span`
position: absolute;
z-index: 1;
inset: -2px;
border: 2px solid #217346;
&::after {
    content: "";
    position: absolute;
    right: -4px;
    bottom: -4px;
    width: 7px;
    height: 7px;
    border: solid #fff;
    border-width: 1px 0 0 1px;
    background: #217346;
}
`;

const VScroll = styled.div`
display: flex;
flex-direction: column;
width: 22px;
padding: 2px 3px 0;
border-right: 1px solid #bdbdbd;
`;
const ScrollButton = styled.button`
display: flex;
align-items: center;
justify-content: center;
flex: none;
width: 15px;
height: 15px;
border: 1px solid #ababab;
background: #fff;
`;
const VTrack = styled.div`
flex: 1;
width: 15px;
background: #dadada;
`;
const VThumb = styled.div`
height: 96%;
border: 1px solid #ababab;
background: #fff;
`;
const BottomBar = styled.div`
display: flex;
height: 27px;
border-right: 1px solid #bdbdbd;
`;
const SheetArrows = styled.div`
display: flex;
gap: 19px;
width: 100px;
padding-left: 24px;
`;
const SheetTab = styled.button`
position: relative;
width: 65px;
height: 25px;
margin-top: -1px;
padding-top: 3px;
border: solid #999;
border-width: 0 1px 2px;
border-bottom-color: #217346;
background: #fff;
font-family: "Open Sans", sans-serif;
font-weight: bold;
color: #217346;
`;
const AddSheet = styled.button`
margin-left: 33px;
`;
const HScroll = styled.div`
display: flex;
align-items: center;
width: 416px;
margin-left: auto;
padding-right: 19px;
`;
const HTrack = styled.div`
flex: 1;
height: 15px;
margin-right: 2px;
background: #dadada;
`;
const HThumb = styled.div`
width: 93%;
height: 15px;
border: 1px solid #ababab;
background: #fff;
`;

const Pane = styled.aside`
display: flex;
flex-direction: column;
flex: none;
width: 359px;
padding: 0 8px 0 7px;
color: #111;
`;
const PaneTools = styled.div`
display: flex;
justify-content: flex-end;
align-items: center;
gap: 32px;
height: 41px;
padding: 5px 11px 0 0;
`;
const Banner = styled.h1`
margin: 0;
border: 1px solid #35553a;
background: #003c00;
color: #fff;
font-size: 18px;
font-weight: 600;
line-height: 46px;
text-align: center;
`;
const PaneTabs = styled.div`
display: flex;
align-items: flex-end;
height: 23px;
padding-left: 6px;
`;
const PaneTab = styled.button`
width: ${(p) => p.$width}px;
height: ${(p) => (p.$active ? 21 : 18)}px;
padding-left: 5px;
border: 1px solid #dcdcdc;
border-bottom: none;
background: ${(p) => (p.$active ? '#fff' : '#f0f0f0')};
font-family: "Liberation Sans", Arial, sans-serif;
font-size: 11px;
text-align: left;
white-space: nowrap;
`;
const PaneBody = styled.div`
width: 326px;
height: 290px;
margin-left: 4px;
padding: 20px 16px;
border: 1px solid #dcdcdc;
background: #fff;
font-size: 11px;
`;
const CheckGrid = styled.div`
display: grid;
grid-template-columns: 93px 1fr;
row-gap: 21px;
`;
const Check = styled.label`
display: flex;
align-items: center;
gap: 4px;
height: 14px;
white-space: nowrap;
font-weight: ${(p) => (p.$strong ? 'bold' : 'normal')};
color: ${(p) => (p.$strong ? '#000080' : '#111')};
`;
const CheckBox = styled.input`
appearance: none;
flex: none;
width: 13px;
height: 13px;
margin: 0;
border: 1px solid #333;
background: #fff;
&:checked::before {
    content: "";
    display: block;
    width: 8px;
    height: 4px;
    margin: 2px 0 0 1px;
    border: solid #333;
    border-width: 0 0 1px 1px;
    transform: rotate(-45deg);
}
`;
const LengthRow = styled.div`
display: flex;
align-items: center;
gap: 14px;
margin-top: 33px;
padding-left: 5px;
`;
const Spinner = styled.div`
display: flex;
width: 102px;
height: 20px;
border: 1px solid #aaa;
background: #ffffc0;
`;
const SpinInput = styled.input`
flex: 1;
min-width: 0;
border: none;
outline: none;
padding: 0 1px 2px;
background: none;
font-family: "Open Sans", sans-serif;
color: #333;
`;
const SpinButtons = styled.div`
display: flex;
flex-direction: column;
width: 15px;
padding: 1px 1px 1px 0;
`;
const SpinButton = styled.button`
display: flex;
flex: 1;
align-items: center;
justify-content: center;
overflow: hidden;
border: 1px solid #b5b5b5;
background: #f0f0f0;
`;
const Actions = styled.div`
display: flex;
flex-direction: column;
align-items: flex-start;
gap: 10px;
margin-top: 90px;
padding-left: 90px;
`;
const Generate = styled.button`
width: 92px;
height: 33px;
margin-left: -3px;
padding-bottom: 2px;
border: 1px solid #2a72b5;
box-shadow: inset 0 0 0 2px #d5f3fb;
background: #003c00;
font-family: "DejaVu Sans", Verdana, sans-serif;
font-size: 12px;
font-weight: bold;
color: #fff;
`;

const StatusBar = styled.footer`
display: flex;
align-items: center;
justify-content: space-between;
height: 23px;
padding-left: 8px;
border-top: 1px solid #bdbdbd;
border-bottom: 1px solid #217346;
background: #f1f1f1;
font-size: 11px;
color: #555;
`;
const StatusText = styled.span`
padding-bottom: 2px;
font-family: "Open Sans", sans-serif;
`;
const StatusTools = styled.div`
display: flex;
align-items: center;
height: 21px;
padding-right: 8px;
`;
const ViewButton = styled.button`
display: flex;
align-items: center;
justify-content: center;
width: 38px;
height: 21px;
padding-bottom: 2px;
background: ${(p) => (p.$active ? '#c8c8c8' : 'transparent')};
`;
const ZoomButton = styled.button`
padding: 0 4px;
`;
const ZoomSlider = styled.input`
appearance: none;
width: 100px;
height: 11px;
margin: 0;
background: linear-gradient(#a5a5a5, #a5a5a5) center / 100% 1px no-repeat;
&::-webkit-slider-thumb {
    appearance: none;
    width: 4px;
    height: 11px;
    background: #666;
}
`;
const ZoomValue = styled.button`
margin-left: 5px;
padding-bottom: 2px;
font-family: "Open Sans", sans-serif;
font-size: 11px;
`;

export default App;
